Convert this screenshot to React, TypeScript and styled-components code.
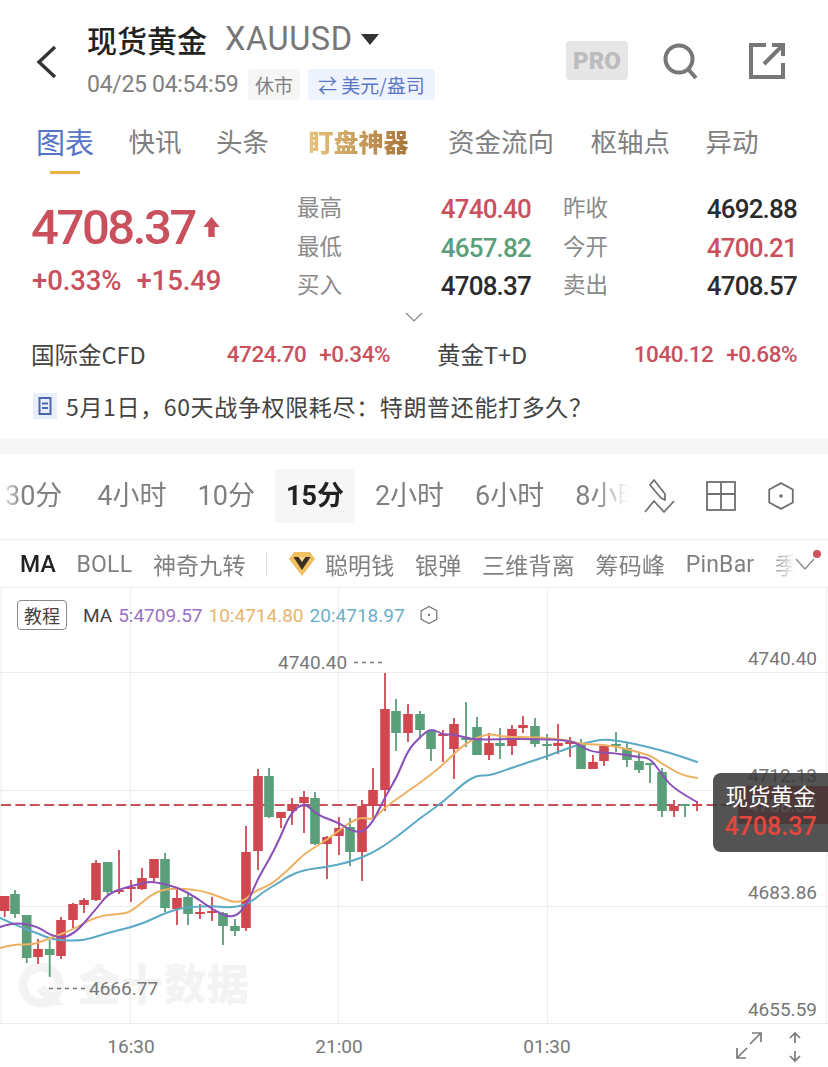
import React from "react"
import styled, { createGlobalStyle } from "styled-components"

const CJK = `"Noto Sans CJK SC", "Noto Sans", sans-serif`
const NUM = `Roboto, "Noto Sans CJK SC", sans-serif`
const RED = "#c9505c"
const GREEN = "#5a9e7a"

const GlobalStyle = createGlobalStyle`
  html, body { margin: 0; padding: 0; background: #fff; }
  body { width: 828px; height: 1067px; overflow: hidden; font-family: ${CJK}; }
`

const Page = styled.div`
  width: 828px;
  height: 1067px;
  display: flex;
  flex-direction: column;
  overflow: hidden;
  background: #fff;
`

const Header = styled.header`
  height: 112px;
  flex: none;
  box-sizing: border-box;
  padding: 19px 42px 0 36px;
  display: flex;
  align-items: flex-start;
`

const BackButton = styled.div`
  width: 52px;
  height: 60px;
  flex: none;
  padding-top: 26px;
`

const TitleColumn = styled.div`
  flex: 1;
  display: flex;
  flex-direction: column;
  gap: 9px;
`

const TitleRow = styled.div`
  height: 40px;
  display: flex;
  align-items: center;
`

const Title = styled.span`
  font-size: 30px;
  font-weight: 500;
  color: #222;
  margin-left: -1px;
`

const Symbol = styled.span`
  margin-left: 18px;
  font-family: ${NUM};
  font-size: 32.5px;
  letter-spacing: 0.6px;
  color: #777;
`

const Caret = styled.span`
  margin-left: 8px;
  width: 0;
  height: 0;
  border-left: 9px solid transparent;
  border-right: 9px solid transparent;
  border-top: 11px solid #333;
`

const SubRow = styled.div`
  display: flex;
  align-items: center;
  height: 32px;
`

const TimeText = styled.span`
  font-family: ${NUM};
  font-size: 23px;
  letter-spacing: -0.3px;
  color: #808080;
  width: 161px;
  margin-left: -1px;
`

const Chip = styled.span<{ $blue?: boolean }>`
  height: 31px;
  display: flex;
  align-items: center;
  padding: 0 ${(p) => (p.$blue ? 10 : 7)}px;
  margin-left: ${(p) => (p.$blue ? 8 : 0)}px;
  font-size: 19px;
  color: ${(p) => (p.$blue ? "#5a78c8" : "#808080")};
  background: ${(p) => (p.$blue ? "#eff3fd" : "#f6f6f6")};
  border-radius: 2px;
`

const HeaderActions = styled.div`
  display: flex;
  align-items: center;
  gap: 35px;
  padding-top: 22px;
`

const ProBadge = styled.span`
  width: 62px;
  height: 39px;
  display: flex;
  align-items: center;
  justify-content: center;
  background: #e6e6e6;
  border-radius: 4px;
  font-family: ${NUM};
  font-weight: 900;
  font-size: 24px;
  color: #bcbcbc;
`

const ShareIcon = styled.svg`
  margin-left: 15px;
`

const Tabs = styled.nav`
  height: 68px;
  flex: none;
  box-sizing: border-box;
  padding-left: 36px;
  display: flex;
  align-items: flex-start;
  gap: 34.5px;
`

const Tab = styled.span<{ $active?: boolean; $push?: number }>`
  position: relative;
  height: 62px;
  line-height: 58px;
  margin-left: ${(p) => p.$push || 0}px;
  font-size: ${(p) => (p.$active ? 29 : 26.5)}px;
  color: ${(p) => (p.$active ? "#5574c6" : "#7f7f7f")};

  &::after {
    content: "";
    display: ${(p) => (p.$active ? "block" : "none")};
    position: absolute;
    left: 14px;
    right: 14px;
    bottom: 0;
    height: 3px;
    background: #e6b240;
  }
`

const GoldTab = styled.span`
  height: 62px;
  line-height: 58px;
  margin: 0 5px;
  font-size: 25px;
  font-weight: 900;
  background: linear-gradient(90deg, #e6c47c, #a8743a);
  -webkit-background-clip: text;
  background-clip: text;
  color: transparent;
`

const Quote = styled.section`
  height: 126px;
  flex: none;
  box-sizing: border-box;
  padding: 9px 31px 0 32px;
  display: flex;
`

const PriceColumn = styled.div`
  width: 265px;
  flex: none;
  padding-top: 10px;
`

const BigPrice = styled.div`
  height: 56px;
  display: flex;
  align-items: center;
  margin-left: -1px;
  font-family: ${NUM};
  font-size: 49px;
  font-weight: 500;
  letter-spacing: -2.4px;
  color: ${RED};
`

const PriceArrow = styled.svg`
  margin-left: 7px;
`

const ChangeRow = styled.div`
  margin-top: 9px;
  display: flex;
  gap: 15px;
  font-family: ${NUM};
  font-size: 27.5px;
  font-weight: 500;
  letter-spacing: -0.1px;
  color: ${RED};
`

const StatsGrid = styled.div`
  flex: 1;
  display: grid;
  grid-template-columns: 46px 188px 78px 1fr;
  grid-auto-rows: 38.5px;
`

const StatLabel = styled.span`
  font-size: 22.5px;
  line-height: 35px;
  white-space: nowrap;
  color: #8a8a8a;
  &:nth-child(4n + 3) { margin-left: 32px; }
`

const StatValue = styled.span<{ $tone?: string }>`
  font-family: ${NUM};
  font-size: 26px;
  line-height: 40px;
  text-align: right;
  letter-spacing: -0.8px;
  font-weight: 500;
  color: ${(p) => p.$tone || "#2b2b2b"};
`

const ExpandRow = styled.div`
  height: 24px;
  flex: none;
  display: flex;
  justify-content: center;
  padding-top: 6px;
  box-sizing: border-box;
`

const Markets = styled.section`
  height: 48px;
  flex: none;
  box-sizing: border-box;
  padding: 0 31px 0 32px;
  display: grid;
  grid-template-columns: 358px 359px;
  column-gap: 48px;
  align-items: center;
`

const MarketCell = styled.div`
  display: flex;
  align-items: center;
`

const MarketName = styled.span`
  flex: 1;
  margin-left: -1px;
  font-size: 23.5px;
  color: #444;
`

const MarketValue = styled.span<{ $wide?: boolean }>`
  margin-left: ${(p) => (p.$wide ? 13 : 0)}px;
  font-family: ${NUM};
  font-size: 22.5px;
  font-weight: 500;
  letter-spacing: -0.5px;
  color: ${RED};
`

const Notice = styled.section`
  height: 56px;
  flex: none;
  box-sizing: border-box;
  padding: 0 0 0 33px;
  display: flex;
  align-items: center;
  gap: 9px;
  font-size: 23px;
  color: #444;
  letter-spacing: 0.65px;
`

const SectionGap = styled.div<{ $h: number; $top?: number }>`
  height: ${(p) => p.$h}px;
  margin-top: ${(p) => p.$top || 0}px;
  flex: none;
  background: #f6f6f6;
`

const IntervalBar = styled.div`
  height: 84px;
  flex: none;
  display: flex;
  align-items: center;
`

const IntervalScroller = styled.div`
  width: 628px;
  flex: none;
  overflow: hidden;
  display: flex;
  align-items: center;
  gap: 9px;
  mask-image: linear-gradient(90deg, transparent 0, #000 22px, #000 595px, transparent 628px);
`

const Interval = styled.span<{ $active?: boolean; $clip?: number }>`
  flex: none;
  height: 54px;
  line-height: 54px;
  padding: 0 11px;
  margin-left: ${(p) => (p.$clip ? -p.$clip : 0)}px;
  margin-right: ${(p) => (p.$clip ? 4 : 0)}px;
  font-family: ${NUM}, ${CJK};
  font-size: 27px;
  font-weight: ${(p) => (p.$active ? 700 : 400)};
  color: ${(p) => (p.$active ? "#222" : "#808080")};
  background: ${(p) => (p.$active ? "#f6f6f6" : "transparent")};
  border-radius: 3px;
`

const ToolIcons = styled.div`
  display: flex;
  align-items: center;
  gap: 30px;
  margin-left: 16px;
`

const IndicatorBar = styled.div`
  position: relative;
  height: 46px;
  flex: none;
  display: flex;
  align-items: center;
`

const IndicatorScroller = styled.div`
  width: 795px;
  flex: none;
  box-sizing: border-box;
  padding-left: 20px;
  overflow: hidden;
  display: flex;
  align-items: center;
  gap: 20.6px;
  mask-image: linear-gradient(90deg, #000 770px, transparent 795px);
`

const Indicator = styled.span<{ $active?: boolean }>`
  flex: none;
  font-family: Roboto, ${CJK};
  font-size: 23px;
  letter-spacing: 0.2px;
  font-weight: ${(p) => (p.$active ? 500 : 400)};
  color: ${(p) => (p.$active ? "#222" : "#808080")};
`

const IndicatorDivider = styled.span`
  width: 1px;
  height: 24px;
  flex: none;
  background: #e4e4e4;
`

const SmartMoney = styled.span`
  flex: none;
  display: flex;
  align-items: center;
  gap: 9px;
`

const RedDot = styled.span`
  position: absolute;
  left: 813px;
  top: 9px;
  width: 8px;
  height: 8px;
  border-radius: 50%;
  background: #d0505c;
`

const ChartPanel = styled.div`
  position: relative;
  flex: 1;
  min-height: 0;
`

const Legend = styled.div`
  position: absolute;
  left: 17px;
  top: 13px;
  display: flex;
  align-items: center;
  font-family: ${NUM};
  font-size: 19px;
`

const GuideButton = styled.span`
  width: 50px;
  height: 30px;
  box-sizing: border-box;
  display: flex;
  align-items: center;
  justify-content: center;
  border: 1px solid #888;
  border-radius: 4px;
  font-family: ${CJK};
  font-size: 18px;
  color: #444;
  margin-right: 16px;
`

const LegendItem = styled.span<{ $color: string }>`
  margin-right: 6px;
  color: ${(p) => p.$color};
`

const LegendGap = styled.span`
  width: 8px;
`

const PriceTag = styled.div`
  position: absolute;
  right: 0;
  top: 186px;
  width: 115px;
  height: 79px;
  box-sizing: border-box;
  padding-top: 6px;
  background: rgba(55, 55, 55, 0.86);
  border-radius: 8px 0 0 8px;
  text-align: center;
  overflow: hidden;
`

const TagName = styled.div`
  font-size: 22.5px;
  line-height: 32px;
  color: #fff;
`

const TagPrice = styled.div`
  font-family: ${NUM};
  font-size: 25px;
  font-weight: 500;
  line-height: 32px;
  color: #e5463c;
`

type Candle = [number, number, number, number, number, "r" | "g"]

// x, high, low, body top, body bottom
const candles: Candle[] = [
  [4.7, 896, 917, 896, 911, "r"], [15, 890, 918, 894, 914, "g"], [26.7, 915, 963, 915, 958, "g"],
  [38, 939, 964, 949, 957, "r"], [49.7, 940, 977, 949, 955, "g"], [61, 917, 959, 920, 956, "r"],
  [73, 903, 928, 904, 920, "r"], [84, 898, 913, 900, 905, "r"], [96, 860, 901, 863, 900, "r"],
  [107.7, 862, 895, 862, 892, "g"], [119, 850, 894, 890, 892, "r"], [131, 880, 902, 887, 889, "r"],
  [142, 868, 890, 878, 889, "r"], [154, 859, 882, 859, 878, "r"], [165, 853, 912, 859, 908, "g"],
  [177, 889, 925, 898, 909, "r"], [188, 894, 925, 897, 914, "g"], [200, 904, 919, 912, 914, "r"],
  [212, 897, 921, 911, 913, "r"], [223, 912, 945, 913, 926, "g"], [235, 919, 936, 926, 931, "g"],
  [246, 826, 931, 852, 928, "r"], [258, 769, 870, 776, 851, "r"], [269, 768, 818, 776, 817, "g"],
  [281, 812, 828, 812, 818, "r"], [292, 798, 825, 804, 811, "r"], [304, 791, 833, 797, 803, "r"],
  [315, 792, 845, 798, 844, "g"], [327, 836, 879, 837, 844, "r"], [339, 817, 855, 828, 836, "r"],
  [350, 818, 866, 827, 852, "g"], [362, 800, 881, 806, 852, "r"], [373, 768, 818, 790, 806, "r"],
  [385, 673, 811, 709, 790, "r"], [396, 699, 751, 711, 733, "g"], [408, 704, 742, 714, 733, "r"],
  [420, 711, 739, 714, 730, "g"], [431, 731, 761, 731, 749, "g"], [443, 730, 762, 734, 736, "r"],
  [454, 718, 779, 724, 749, "r"], [466, 702, 747, 738, 740, "g"], [477, 717, 755, 727, 755, "g"],
  [489, 733, 760, 743, 755, "r"], [500, 728, 759, 743, 746, "g"], [512, 725, 755, 729, 746, "r"],
  [523, 716, 733, 725, 728, "r"], [535, 718, 747, 726, 744, "g"], [547, 734, 760, 744, 746, "g"],
  [558, 724, 754, 743, 746, "r"], [570, 737, 757, 742, 744, "r"], [581, 739, 769, 743, 769, "g"],
  [593, 755, 769, 762, 769, "r"], [604, 746, 766, 746, 761, "r"], [616, 732, 752, 744, 746, "g"],
  [627, 743, 767, 748, 760, "g"], [639, 753, 773, 761, 770, "g"], [650, 763, 783, 763, 765, "g"],
  [662, 768, 817, 772, 811, "g"], [674, 800, 817, 806, 811, "r"], [685, 804, 817, 804, 806, "g"],
  [697, 801, 811, 804, 806, "r"],
]

// curve through the midpoints so the averages don't look like polylines
const smooth = (pts: number[][]) => {
  let d = `M${pts[0][0]} ${pts[0][1]}`
  for (let i = 1; i < pts.length - 1; i++) {
    const mx = (pts[i][0] + pts[i + 1][0]) / 2
    const my = (pts[i][1] + pts[i + 1][1]) / 2
    d += ` Q${pts[i][0]} ${pts[i][1]} ${mx} ${my}`
  }
  const last = pts[pts.length - 1]
  return `${d} L${last[0]} ${last[1]}`
}

const ma5 = [[0, 927], [13, 922], [37, 926], [53, 937], [72, 937], [97, 908], [107, 895], [120, 889], [147, 882], [155, 882], [177, 887], [197, 898], [213, 910], [233, 919], [247, 905], [257, 880], [270, 858], [280, 838], [290, 814], [304, 802], [317, 815], [337, 822], [350, 830], [362, 833], [373, 822], [385, 797], [397, 777], [408, 750], [420, 737], [431, 728], [443, 735], [454, 734], [473, 740], [503, 739], [530, 739], [568, 740], [580, 745], [591, 752], [615, 753], [638, 757], [650, 758], [661, 773], [671, 786], [688, 797], [697, 802]]
const ma10 = [[0, 948], [13, 944], [33, 945], [53, 937], [72, 930], [97, 916], [120, 914], [131, 912], [153, 893], [170, 888], [200, 890], [220, 897], [235, 903], [247, 899], [253, 892], [270, 885], [280, 877], [290, 868], [305, 853], [327, 840], [350, 822], [362, 817], [373, 820], [385, 807], [420, 783], [443, 765], [465, 743], [488, 733], [503, 737], [530, 737], [548, 738], [565, 740], [581, 744], [611, 745], [650, 755], [661, 763], [681, 775], [697, 778]]
const ma20 = [[0, 918], [20, 927], [37, 933], [53, 940], [83, 941], [107, 933], [140, 925], [167, 912], [187, 907], [213, 906], [233, 908], [250, 903], [263, 892], [280, 882], [287, 877], [303, 870], [327, 867], [350, 862], [373, 853], [397, 837], [420, 818], [442, 803], [465, 782], [478, 775], [488, 776], [503, 771], [523, 764], [548, 756], [568, 748], [585, 743], [604, 739], [626, 742], [648, 747], [671, 753], [697, 762]]

// the svg starts at y=587 on the page, so it draws in page coordinates
const CandleChart = () => (
  <svg width="828" height="480" viewBox="0 587 828 480" style={{ display: "block" }}>
    <g stroke="#ededed" strokeWidth="1">
      <line x1="0" y1="587.5" x2="828" y2="587.5" />
      <line x1="1" y1="587" x2="1" y2="1023" />
      <line x1="130.5" y1="587" x2="130.5" y2="1023" />
      <line x1="338.5" y1="587" x2="338.5" y2="1023" />
      <line x1="547.5" y1="587" x2="547.5" y2="1023" />
      <line x1="826.5" y1="587" x2="826.5" y2="1023" />
      <line x1="0" y1="672.5" x2="828" y2="672.5" />
      <line x1="0" y1="790.5" x2="828" y2="790.5" />
      <line x1="0" y1="906.5" x2="828" y2="906.5" />
      <line x1="0" y1="1023.5" x2="828" y2="1023.5" />
    </g>

    {/* watermark */}
    <g fill="#f3f3f3">
      <circle cx="41" cy="985" r="18" fill="none" stroke="#f3f3f3" strokeWidth="9" />
      <path d="M44 985 l20 20 h-12 l-16 -14z" />
      <text x="78" y="1000" fontFamily={CJK} fontWeight="900" fontSize="42" letterSpacing="1">金十数据</text>
    </g>

    <line x1="1" y1="805" x2="738" y2="805" stroke="#c8505c" strokeWidth="1.8" strokeDasharray="10 4.4" />

    {candles.map(([x, hi, lo, top, bottom, c], i) => {
      const fill = c === "r" ? "#d1474f" : "#5a9e7a"
      return (
        <g key={i} fill={fill}>
          <rect x={x - 0.9} y={hi} width="1.8" height={lo - hi} />
          <rect x={x - 4.8} y={top} width="9.6" height={bottom - top} />
        </g>
      )
    })}

    <g fill="none" strokeWidth="2" strokeLinecap="round">
      <path d={smooth(ma20)} stroke="#5ca9c6" />
      <path d={smooth(ma10)} stroke="#eeb062" />
      <path d={smooth(ma5)} stroke="#8a50b8" />
    </g>

    <g fontFamily={NUM} fontSize="19" fill="#777">
      <text x="278" y="669">4740.40</text>
      <text x="89" y="995">4666.77</text>
      <g textAnchor="end">
        <text x="817" y="665">4740.40</text>
        <text x="817" y="782">4712.13</text>
        <text x="817" y="899">4683.86</text>
        <text x="817" y="1016">4655.59</text>
      </g>
      <g textAnchor="middle">
        <text x="131" y="1053">16:30</text>
        <text x="339" y="1053">21:00</text>
        <text x="547" y="1053">01:30</text>
      </g>
    </g>
    <g stroke="#777" strokeWidth="1.4" strokeDasharray="4 4">
      <line x1="354" y1="662.5" x2="384" y2="662.5" />
      <line x1="49" y1="988.5" x2="86" y2="988.5" />
    </g>

    {/* live price label, seen through the tag on top of it */}
    <rect x="738" y="786" width="90" height="38" fill="#d1474f" />
    <text x="817" y="812" textAnchor="end" fontFamily={NUM} fontSize="19" fill="#fff">4708.37</text>

    {/* axis controls */}
    <g fill="none" stroke="#7a7a7a" strokeWidth="1.7">
      <path d="M750 1044 L761 1033 M752 1033 H761 V1042" />
      <path d="M747 1048 L737 1058 M737 1048 V1058 H746" />
      <path d="M795 1033 V1043 M790 1038 L795 1033 L800 1038" />
      <path d="M795 1051 V1061 M790 1056 L795 1061 L800 1056" />
    </g>
  </svg>
)

const HexIcon = ({ size, color = "#6f6f6f" }: { size: number; color?: string }) => (
  <svg width={size} height={size} viewBox="0 0 28 28" fill="none" stroke={color} strokeWidth="1.7">
    <path d="M14 2 L25 8 V20 L14 26 L3 20 V8 Z" strokeLinejoin="round" />
    <circle cx="14" cy="14" r="1.6" fill={color} stroke="none" />
  </svg>
)

const Gem = () => (
  <svg width="28" height="26" viewBox="0 0 28 26">
    <path d="M6 1 H22 L27 8 L14 25 L1 8 Z" fill="#f0c060" />
    <path d="M5.5 6 H22.5 L14 19 Z" fill="#3a2f20" />
    <path d="M10.5 6 L14 11 L17.5 6 Z" fill="#f6d78e" />
  </svg>
)

export default function App() {
  return (
    <Page>
      <GlobalStyle />
      <Header>
        <BackButton>
          <svg width="22" height="34" viewBox="0 0 22 34" fill="none" stroke="#333" strokeWidth="3.4">
            <path d="M19 2 L3 17 L19 32" />
          </svg>
        </BackButton>
        <TitleColumn>
          <TitleRow>
            <Title>现货黄金</Title>
            <Symbol>XAUUSD</Symbol>
            <Caret />
          </TitleRow>
          <SubRow>
            <TimeText>04/25 04:54:59</TimeText>
            <Chip>休市</Chip>
            <Chip $blue>⇄ 美元/盎司</Chip>
          </SubRow>
        </TitleColumn>
        <HeaderActions>
          <ProBadge>PRO</ProBadge>
          <svg width="36" height="36" viewBox="0 0 36 36" fill="none" stroke="#777" strokeWidth="4">
            <circle cx="16" cy="16" r="13.5" />
            <path d="M25 26 L33 35" />
          </svg>
          <ShareIcon width="37" height="37" viewBox="0 0 37 37" fill="none" stroke="#777" strokeWidth="4">
            <path d="M17 3 H2 V35 H34 V21" />
            <path d="M15 22 L33 4 M23 3 H34 V14" />
          </ShareIcon>
        </HeaderActions>
      </Header>

      <Tabs>
        <Tab $active>图表</Tab>
        <Tab>快讯</Tab>
        <Tab>头条</Tab>
        <GoldTab>盯盘神器</GoldTab>
        <Tab>资金流向</Tab>
        <Tab $push={2}>枢轴点</Tab>
        <Tab $push={1}>异动</Tab>
      </Tabs>

      <Quote>
        <PriceColumn>
          <BigPrice>
            4708.37
            <PriceArrow width="19" height="22" viewBox="0 0 20 24" fill={RED}>
              <path d="M10 1 L19 12 H13.5 V23 H6.5 V12 H1 Z" />
            </PriceArrow>
          </BigPrice>
          <ChangeRow>
            <span>+0.33%</span>
            <span>+15.49</span>
          </ChangeRow>
        </PriceColumn>
        <StatsGrid>
          <StatLabel>最高</StatLabel>
          <StatValue $tone={RED}>4740.40</StatValue>
          <StatLabel>昨收</StatLabel>
          <StatValue>4692.88</StatValue>
          <StatLabel>最低</StatLabel>
          <StatValue $tone={GREEN}>4657.82</StatValue>
          <StatLabel>今开</StatLabel>
          <StatValue $tone={RED}>4700.21</StatValue>
          <StatLabel>买入</StatLabel>
          <StatValue>4708.37</StatValue>
          <StatLabel>卖出</StatLabel>
          <StatValue>4708.57</StatValue>
        </StatsGrid>
      </Quote>

      <ExpandRow>
        <svg width="18" height="10" viewBox="0 0 18 10" fill="none" stroke="#888" strokeWidth="1.2">
          <path d="M1 1 L9 9 L17 1" />
        </svg>
      </ExpandRow>

      <Markets>
        <MarketCell>
          <MarketName>国际金CFD</MarketName>
          <MarketValue>4724.70</MarketValue>
          <MarketValue $wide>+0.34%</MarketValue>
        </MarketCell>
        <MarketCell>
          <MarketName>黄金T+D</MarketName>
          <MarketValue>1040.12</MarketValue>
          <MarketValue $wide>+0.68%</MarketValue>
        </MarketCell>
      </Markets>

      <Notice>
        <svg width="24" height="26" viewBox="0 0 24 26">
          <rect width="24" height="26" fill="#e8eefa" />
          <rect x="6.5" y="5" width="11" height="16" fill="none" stroke="#4a66b0" strokeWidth="2" />
          <path d="M9 10.5 H15 M9 15 H15" stroke="#4a66b0" strokeWidth="2" />
        </svg>
        <span>5月1日，60天战争权限耗尽：特朗普还能打多久？</span>
      </Notice>

      <SectionGap $h={16} $top={4} />

      <IntervalBar>
        <IntervalScroller>
          <Interval $clip={6}>30分</Interval>
          <Interval>4小时</Interval>
          <Interval>10分</Interval>
          <Interval $active>15分</Interval>
          <Interval>2小时</Interval>
          <Interval>6小时</Interval>
          <Interval>8小时</Interval>
        </IntervalScroller>
        <ToolIcons>
          <svg width="32" height="34" viewBox="0 0 32 34" fill="none" stroke="#6f6f6f" strokeWidth="1.7" strokeLinejoin="round">
            <path d="M10 1 L6 6 L17 19 L21 21 L21 15 Z" />
            <path d="M1 33 L10 22 L20 33 L30 22" />
          </svg>
          <svg width="30" height="30" viewBox="0 0 30 30" fill="none" stroke="#6f6f6f" strokeWidth="1.8">
            <rect x="1" y="1" width="28" height="28" />
            <path d="M15 1 V29 M1 13 H29" />
          </svg>
          <HexIcon size={30} />
        </ToolIcons>
      </IntervalBar>

      <SectionGap $h={3} />

      <IndicatorBar>
        <IndicatorScroller>
          <Indicator $active>MA</Indicator>
          <Indicator>BOLL</Indicator>
          <Indicator>神奇九转</Indicator>
          <IndicatorDivider />
          <SmartMoney>
            <Gem />
            <Indicator>聪明钱</Indicator>
          </SmartMoney>
          <Indicator>银弹</Indicator>
          <Indicator>三维背离</Indicator>
          <Indicator>筹码峰</Indicator>
          <Indicator>PinBar</Indicator>
          <Indicator>季节</Indicator>
        </IndicatorScroller>
        <svg width="20" height="12" viewBox="0 0 20 12" fill="none" stroke="#888" strokeWidth="1.3">
          <path d="M1 1 L10 11 L19 1" />
        </svg>
        <RedDot />
      </IndicatorBar>

      <ChartPanel>
        <CandleChart />
        <Legend>
          <GuideButton>教程</GuideButton>
          <LegendItem $color="#444">MA</LegendItem>
          <LegendItem $color="#9a70c4">5:4709.57</LegendItem>
          <LegendItem $color="#e8b46e">10:4714.80</LegendItem>
          <LegendItem $color="#6cb0c8">20:4718.97</LegendItem>
          <LegendGap />
          <HexIcon size={20} />
        </Legend>
        <PriceTag>
          <TagName>现货黄金</TagName>
          <TagPrice>4708.37</TagPrice>
        </PriceTag>
      </ChartPanel>
    </Page>
  )
}
